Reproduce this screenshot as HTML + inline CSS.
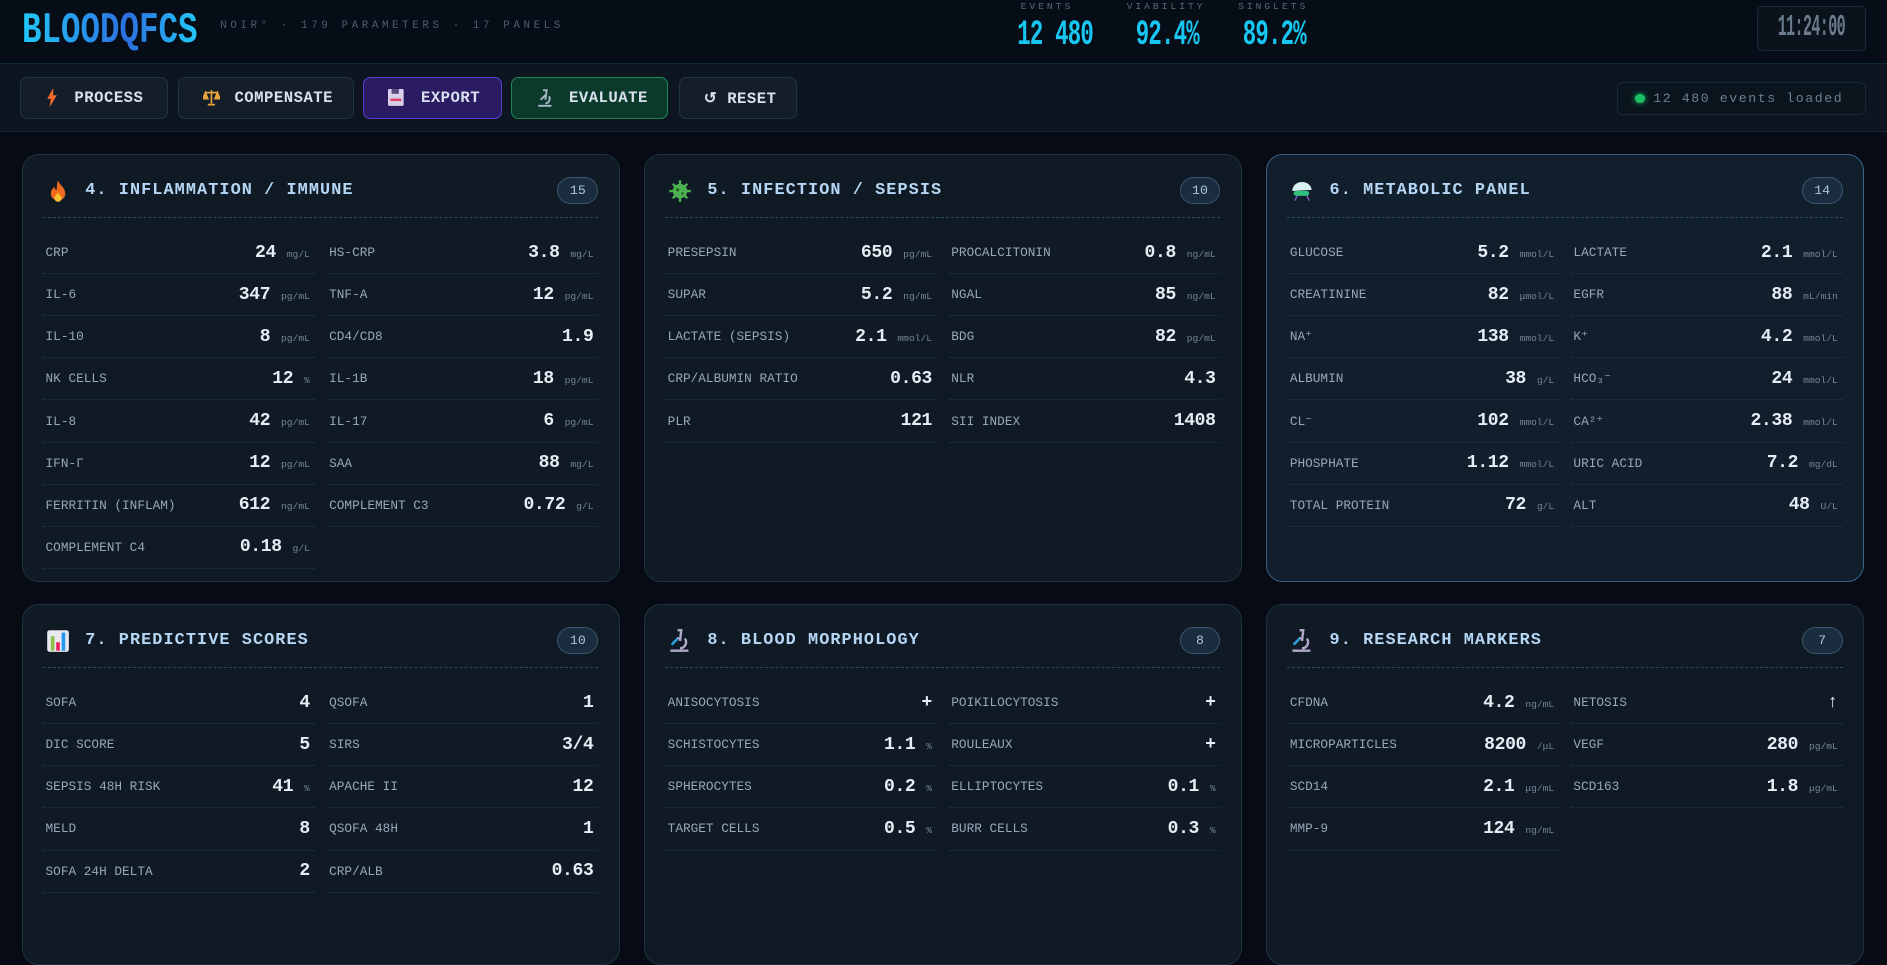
<!DOCTYPE html>
<html><head><meta charset="utf-8"><style>
html{zoom:1.2034}
*{box-sizing:border-box;margin:0;padding:0}
body{width:1568px;height:744px;overflow:hidden;background:#070c14;font-family:"Liberation Mono",monospace;color:#c8d4e0;position:relative}
.hdr{position:absolute;left:0;top:0;width:1568px;height:52px;background:#070d16}
.logo{position:absolute;left:18px;top:6px;font:bold 36px "Liberation Mono",monospace;letter-spacing:0;background:linear-gradient(90deg,#22c8f8,#2d6fe0 60%,#22c8f8);-webkit-background-clip:text;color:transparent;transform:scaleX(0.75);transform-origin:left}
.sub{position:absolute;left:183px;top:17px;font-size:9px;letter-spacing:3px;color:#4c5c6e}
.st{position:absolute;top:1px;text-align:center}
.st .l{font-size:8px;letter-spacing:2.5px;color:#5a6878}
.st .v{font:bold 29px "Liberation Mono",monospace;color:#18c6f2;display:inline-block;transform:scaleX(0.64);margin-top:3px;letter-spacing:-1px;white-space:nowrap}
.clock{position:absolute;left:1460px;top:5px;width:91px;height:37px;border:1px solid #17293a;border-radius:4px;background:#0a121c;display:flex;align-items:center;justify-content:center;overflow:hidden}
.clock span{display:block;font:bold 25px "Liberation Mono",monospace;line-height:25px;color:#6b7b8c;transform:scaleX(0.5);letter-spacing:-1px;white-space:nowrap}
.bar{position:absolute;left:0;top:52px;width:1568px;height:58px;background:#0d1520;border-top:1px solid #10293a;border-bottom:1px solid #10293a}
.btn{position:absolute;top:11px;height:35px;border:1px solid #1d3546;border-radius:6px;background:#141d2a;font-weight:bold;font-size:13px;letter-spacing:0.4px;color:#d8e2ee;display:flex;align-items:center;padding-left:20px;gap:14px}
.pill{position:absolute;left:1344px;top:15px;width:207px;height:28px;border:1px solid #172a38;border-radius:5px;background:#0a141d;font-size:11px;letter-spacing:1.3px;color:#6f7f8f;display:flex;align-items:center;padding-left:14px;gap:7px}
.dot{width:8px;height:8px;border-radius:50%;background:#18c060;box-shadow:0 0 5px #18c060}
.card{position:absolute;width:497px;border:1px solid #1e3242;border-radius:14px;background:#101a25;padding:0 17px}
.card.hl{border-color:#3a6384;background:#111e2c}
.ch{height:52px;display:flex;align-items:center;padding-top:8px;border-bottom:1px dashed #2a4a60;position:relative}
.ch .ic{width:20px;height:20px;margin-left:2px;margin-right:13px}
.ch .t{font-weight:bold;font-size:14px;letter-spacing:0.9px;color:#b5d6f5}
.ch .b{position:absolute;right:0;top:18px;height:23px;min-width:34px;padding:0 8px;border-radius:12px;background:#1a2c3e;border:1px solid #3a5670;font-size:11px;color:#a9c4dc;text-align:center;line-height:21px}
.g{display:grid;grid-template-columns:1fr 1fr;column-gap:10px;padding-top:12px}
.r{height:35px;display:flex;align-items:center;justify-content:space-between;border-bottom:1px dotted #1d3a4a;padding:0 4px 0 2px}
.r .k{font-size:10.6px;letter-spacing:0;color:#97a8b8}
.r .v{font-weight:bold;font-size:15px;color:#e6edf5;letter-spacing:-0.3px}
.r .u{font-size:8px;color:#74869a;margin-left:9px;font-weight:normal;letter-spacing:0}
</style></head><body>
<div class="hdr">
<div class="logo">BLOODQFCS</div>
<div class="sub">NOIR° · 179 PARAMETERS · 17 PANELS</div>
<div class="st" style="left:828px;width:84px"><div class="l">EVENTS</div><div class="v">12&nbsp;480</div></div>
<div class="st" style="left:929px;width:80px"><div class="l">VIABILITY</div><div class="v">92.4%</div></div>
<div class="st" style="left:1018px;width:80px"><div class="l">SINGLETS</div><div class="v">89.2%</div></div>
<div class="clock"><span>11:24:00</span></div>
</div>
<div class="bar">
<div class="btn" style="left:17px;width:123px"><svg width="10" height="16" viewBox="0 0 10 16"><path d="M6 0L1 9h3l-1 7 6-10H6z" fill="#f26b2a"/></svg>PROCESS</div>
<div class="btn" style="left:148px;width:146px;gap:12px"><svg width="14" height="14" viewBox="0 0 14 14"><path d="M7 1v11M2 3h10M2 3l-2 5h4zM12 3l-2 5h4zM4 13h6" stroke="#e8a43a" stroke-width="1.4" fill="#e8a43a"/></svg>COMPENSATE</div>
<div class="btn" style="left:302px;width:115px;background:#2a1b62;border-color:#5a3fd0"><svg width="13" height="14" viewBox="0 0 13 14"><rect x="0" y="0" width="13" height="14" rx="1" fill="#d8cfe8"/><rect x="3" y="0" width="6" height="4" fill="#5a4a7a"/><rect x="2" y="8" width="9" height="2" fill="#e04060"/></svg>EXPORT</div>
<div class="btn" style="left:425px;width:130px;background:#0b3a2b;border-color:#1c8656"><svg width="13" height="15" viewBox="0 0 13 15"><path d="M5 1l3 0-1 8M3 9l4-4M1 14h11M7 12a4 4 0 0 0 3-6" stroke="#a8b8c8" stroke-width="1.6" fill="none"/></svg>EVALUATE</div>
<div class="btn" style="left:564px;width:98px;gap:10px">↺ RESET</div>
<div class="pill"><span class="dot"></span>12 480 events loaded</div>
</div>

<div class="card" style="left:18px;top:128px;height:356px">
<div class="ch"><svg class="ic" viewBox="0 0 20 20"><path d="M10 1c1 4 6 6 6 11a6 6 0 0 1-12 0c0-3 2-4 3-6 0 2 1 3 2 3 0-3 0-5 1-8z" fill="#f06a22"/><path d="M10 11c1 2 3 3 3 5a3 3 0 0 1-6 0c0-2 2-3 3-5z" fill="#fbc02d"/></svg><span class="t">4. INFLAMMATION / IMMUNE</span><span class="b">15</span></div>
<div class="g">
<div class="r"><span class="k">CRP</span><span class="v">24<span class="u">mg/L</span></span></div>
<div class="r"><span class="k">HS-CRP</span><span class="v">3.8<span class="u">mg/L</span></span></div>
<div class="r"><span class="k">IL-6</span><span class="v">347<span class="u">pg/mL</span></span></div>
<div class="r"><span class="k">TNF-A</span><span class="v">12<span class="u">pg/mL</span></span></div>
<div class="r"><span class="k">IL-10</span><span class="v">8<span class="u">pg/mL</span></span></div>
<div class="r"><span class="k">CD4/CD8</span><span class="v">1.9</span></div>
<div class="r"><span class="k">NK CELLS</span><span class="v">12<span class="u">%</span></span></div>
<div class="r"><span class="k">IL-1B</span><span class="v">18<span class="u">pg/mL</span></span></div>
<div class="r"><span class="k">IL-8</span><span class="v">42<span class="u">pg/mL</span></span></div>
<div class="r"><span class="k">IL-17</span><span class="v">6<span class="u">pg/mL</span></span></div>
<div class="r"><span class="k">IFN-Γ</span><span class="v">12<span class="u">pg/mL</span></span></div>
<div class="r"><span class="k">SAA</span><span class="v">88<span class="u">mg/L</span></span></div>
<div class="r"><span class="k">FERRITIN (INFLAM)</span><span class="v">612<span class="u">ng/mL</span></span></div>
<div class="r"><span class="k">COMPLEMENT C3</span><span class="v">0.72<span class="u">g/L</span></span></div>
<div class="r"><span class="k">COMPLEMENT C4</span><span class="v">0.18<span class="u">g/L</span></span></div>
</div></div>

<div class="card" style="left:535px;top:128px;height:356px">
<div class="ch"><svg class="ic" viewBox="0 0 20 20"><circle cx="10" cy="10" r="6" fill="#4caf50"/><path d="M10 1v4M10 15v4M1 10h4M15 10h4M4 4l3 3M13 13l3 3M16 4l-3 3M4 16l3-3" stroke="#4caf50" stroke-width="2"/><circle cx="8" cy="9" r="1.3" fill="#1b5e20"/><circle cx="12" cy="12" r="1" fill="#1b5e20"/></svg><span class="t">5. INFECTION / SEPSIS</span><span class="b">10</span></div>
<div class="g">
<div class="r"><span class="k">PRESEPSIN</span><span class="v">650<span class="u">pg/mL</span></span></div>
<div class="r"><span class="k">PROCALCITONIN</span><span class="v">0.8<span class="u">ng/mL</span></span></div>
<div class="r"><span class="k">SUPAR</span><span class="v">5.2<span class="u">ng/mL</span></span></div>
<div class="r"><span class="k">NGAL</span><span class="v">85<span class="u">ng/mL</span></span></div>
<div class="r"><span class="k">LACTATE (SEPSIS)</span><span class="v">2.1<span class="u">mmol/L</span></span></div>
<div class="r"><span class="k">BDG</span><span class="v">82<span class="u">pg/mL</span></span></div>
<div class="r"><span class="k">CRP/ALBUMIN RATIO</span><span class="v">0.63</span></div>
<div class="r"><span class="k">NLR</span><span class="v">4.3</span></div>
<div class="r"><span class="k">PLR</span><span class="v">121</span></div>
<div class="r"><span class="k">SII INDEX</span><span class="v">1408</span></div>
</div></div>

<div class="card hl" style="left:1052px;top:128px;height:356px">
<div class="ch"><svg class="ic" viewBox="0 0 20 20"><path d="M2 10a8 7 0 0 1 16-1z" fill="#d8f0f0"/><rect x="3" y="10" width="13" height="4" rx="2" fill="#2ec27e"/><path d="M6 14l-2 4M14 14l2 4" stroke="#7a5ac0" stroke-width="1.2"/></svg><span class="t">6. METABOLIC PANEL</span><span class="b">14</span></div>
<div class="g">
<div class="r"><span class="k">GLUCOSE</span><span class="v">5.2<span class="u">mmol/L</span></span></div>
<div class="r"><span class="k">LACTATE</span><span class="v">2.1<span class="u">mmol/L</span></span></div>
<div class="r"><span class="k">CREATININE</span><span class="v">82<span class="u">μmol/L</span></span></div>
<div class="r"><span class="k">EGFR</span><span class="v">88<span class="u">mL/min</span></span></div>
<div class="r"><span class="k">NA⁺</span><span class="v">138<span class="u">mmol/L</span></span></div>
<div class="r"><span class="k">K⁺</span><span class="v">4.2<span class="u">mmol/L</span></span></div>
<div class="r"><span class="k">ALBUMIN</span><span class="v">38<span class="u">g/L</span></span></div>
<div class="r"><span class="k">HCO₃⁻</span><span class="v">24<span class="u">mmol/L</span></span></div>
<div class="r"><span class="k">CL⁻</span><span class="v">102<span class="u">mmol/L</span></span></div>
<div class="r"><span class="k">CA²⁺</span><span class="v">2.38<span class="u">mmol/L</span></span></div>
<div class="r"><span class="k">PHOSPHATE</span><span class="v">1.12<span class="u">mmol/L</span></span></div>
<div class="r"><span class="k">URIC ACID</span><span class="v">7.2<span class="u">mg/dL</span></span></div>
<div class="r"><span class="k">TOTAL PROTEIN</span><span class="v">72<span class="u">g/L</span></span></div>
<div class="r"><span class="k">ALT</span><span class="v">48<span class="u">U/L</span></span></div>
</div></div>

<div class="card" style="left:18px;top:502px;height:300px">
<div class="ch"><svg class="ic" viewBox="0 0 20 20"><rect x="1" y="1" width="18" height="18" rx="2" fill="#e8e8ee"/><rect x="4" y="6" width="3" height="12" fill="#8bc34a"/><rect x="8.5" y="11" width="3" height="7" fill="#e91e63"/><rect x="13" y="3" width="3" height="15" fill="#2196f3"/></svg><span class="t">7. PREDICTIVE SCORES</span><span class="b">10</span></div>
<div class="g">
<div class="r"><span class="k">SOFA</span><span class="v">4</span></div>
<div class="r"><span class="k">QSOFA</span><span class="v">1</span></div>
<div class="r"><span class="k">DIC SCORE</span><span class="v">5</span></div>
<div class="r"><span class="k">SIRS</span><span class="v">3/4</span></div>
<div class="r"><span class="k">SEPSIS 48H RISK</span><span class="v">41<span class="u">%</span></span></div>
<div class="r"><span class="k">APACHE II</span><span class="v">12</span></div>
<div class="r"><span class="k">MELD</span><span class="v">8</span></div>
<div class="r"><span class="k">QSOFA 48H</span><span class="v">1</span></div>
<div class="r"><span class="k">SOFA 24H DELTA</span><span class="v">2</span></div>
<div class="r"><span class="k">CRP/ALB</span><span class="v">0.63</span></div>
</div></div>

<div class="card" style="left:535px;top:502px;height:300px">
<div class="ch"><svg class="ic" viewBox="0 0 20 20"><path d="M8 1h3l-1 9M4 12l5-5M2 18h15M10 16a5 5 0 0 0 4-8" stroke="#b0a8c8" stroke-width="2" fill="none"/><path d="M3 13l5-5" stroke="#2aa0e0" stroke-width="2"/></svg><span class="t">8. BLOOD MORPHOLOGY</span><span class="b">8</span></div>
<div class="g">
<div class="r"><span class="k">ANISOCYTOSIS</span><span class="v">+</span></div>
<div class="r"><span class="k">POIKILOCYTOSIS</span><span class="v">+</span></div>
<div class="r"><span class="k">SCHISTOCYTES</span><span class="v">1.1<span class="u">%</span></span></div>
<div class="r"><span class="k">ROULEAUX</span><span class="v">+</span></div>
<div class="r"><span class="k">SPHEROCYTES</span><span class="v">0.2<span class="u">%</span></span></div>
<div class="r"><span class="k">ELLIPTOCYTES</span><span class="v">0.1<span class="u">%</span></span></div>
<div class="r"><span class="k">TARGET CELLS</span><span class="v">0.5<span class="u">%</span></span></div>
<div class="r"><span class="k">BURR CELLS</span><span class="v">0.3<span class="u">%</span></span></div>
</div></div>

<div class="card" style="left:1052px;top:502px;height:300px">
<div class="ch"><svg class="ic" viewBox="0 0 20 20"><path d="M8 1h3l-1 9M4 12l5-5M2 18h15M10 16a5 5 0 0 0 4-8" stroke="#b0a8c8" stroke-width="2" fill="none"/><path d="M3 13l5-5" stroke="#2aa0e0" stroke-width="2"/></svg><span class="t">9. RESEARCH MARKERS</span><span class="b">7</span></div>
<div class="g">
<div class="r"><span class="k">CFDNA</span><span class="v">4.2<span class="u">ng/mL</span></span></div>
<div class="r"><span class="k">NETOSIS</span><span class="v">↑</span></div>
<div class="r"><span class="k">MICROPARTICLES</span><span class="v">8200<span class="u">/μL</span></span></div>
<div class="r"><span class="k">VEGF</span><span class="v">280<span class="u">pg/mL</span></span></div>
<div class="r"><span class="k">SCD14</span><span class="v">2.1<span class="u">μg/mL</span></span></div>
<div class="r"><span class="k">SCD163</span><span class="v">1.8<span class="u">μg/mL</span></span></div>
<div class="r"><span class="k">MMP-9</span><span class="v">124<span class="u">ng/mL</span></span></div>
</div></div>
</body></html>
